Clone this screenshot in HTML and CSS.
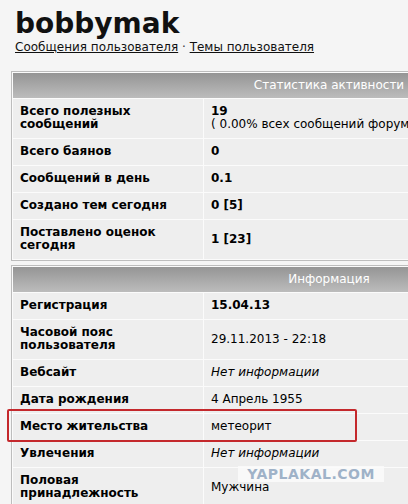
FILE: index.html
```html
<!DOCTYPE html>
<html lang="ru">
<head>
<meta charset="utf-8">
<title>bobbymak</title>
<link rel="stylesheet" href="styles.css">
</head>
<body>
<div class="page">
  <h1 class="title">bobbymak</h1>
  <div class="links"><a href="#">Сообщения пользователя</a> · <a href="#">Темы пользователя</a></div>

  <table class="stats">
    <colgroup><col class="c1"><col class="c2"></colgroup>
    <tr><td class="head" colspan="2">Статистика активности</td></tr>
    <tr><td class="label">Всего полезных<br>сообщений</td><td class="value"><b>19</b><br>( 0.00% всех сообщений форума )</td></tr>
    <tr><td class="label">Всего баянов</td><td class="value"><b>0</b></td></tr>
    <tr><td class="label">Сообщений в день</td><td class="value"><b>0.1</b></td></tr>
    <tr><td class="label">Создано тем сегодня</td><td class="value"><b>0 [5]</b></td></tr>
    <tr><td class="label">Поставлено оценок<br>сегодня</td><td class="value"><b>1 [23]</b></td></tr>
  </table>

  <table class="stats">
    <colgroup><col class="c1"><col class="c2"></colgroup>
    <tr><td class="head" colspan="2">Информация</td></tr>
    <tr><td class="label">Регистрация</td><td class="value"><b>15.04.13</b></td></tr>
    <tr><td class="label">Часовой пояс<br>пользователя</td><td class="value">29.11.2013 - 22:18</td></tr>
    <tr><td class="label">Вебсайт</td><td class="value"><i>Нет информации</i></td></tr>
    <tr><td class="label">Дата рождения</td><td class="value">4 Апрель 1955</td></tr>
    <tr><td class="label">Место жительства</td><td class="value">метеорит</td></tr>
    <tr><td class="label">Увлечения</td><td class="value"><i>Нет информации</i></td></tr>
    <tr><td class="label">Половая<br>принадлежность</td><td class="value">Мужчина</td></tr>
  </table>
</div>
<div class="highlight"></div>
<div class="watermark">YAPLAKAL.COM</div>
</body>
</html>
```
FILE: styles.css
```css
html, body {
  margin: 0;
  padding: 0;
  background: #f5f5f5;
  overflow: hidden;
}
body {
  font-family: "DejaVu Sans", Verdana, sans-serif;
  font-size: 12px;
  color: #000;
  width: 408px;
  height: 504px;
  position: relative;
}
.page {
  padding: 8px 0 0 15px;
}
.title {
  margin: 0;
  font-size: 28px;
  font-weight: bold;
  line-height: 32px;
  color: #111;
}
.links {
  line-height: 14px;
  margin-top: 0;
  color: #333;
}
.links a {
  color: #111;
  text-decoration: underline;
}
.stats {
  margin-left: -4px;
  width: 636px;
  border: 1px solid #bdbdbd;
  border-spacing: 1px;
  background: #fbfbfb;
  table-layout: fixed;
}
.stats col.c1 {
  width: 190px;
}
.stats:first-of-type {
  margin-top: 17px;
}
.stats + .stats {
  margin-top: 4px;
}
.stats td {
  padding: 6px 7px 7px;
  line-height: 13px;
  background: #eeeeee;
  vertical-align: middle;
  white-space: nowrap;
  overflow: hidden;
}
.stats td.head {
  height: 25px;
  padding: 0;
  text-align: center;
  color: #fff;
  background: linear-gradient(#959595, #bcbcbc);
  line-height: 25px;
}
.stats td.label {
  font-weight: bold;
}
.highlight {
  position: absolute;
  left: 7px;
  top: 409px;
  width: 346px;
  height: 29px;
  border: 2px solid #c4282c;
  border-radius: 2px;
}
.watermark {
  position: absolute;
  left: 238px;
  top: 466px;
  width: 146px;
  height: 16px;
  background: rgba(250, 250, 250, 0.85);
  color: #9fb2c8;
  font-weight: bold;
  font-size: 14px;
  line-height: 16px;
  text-align: center;
  letter-spacing: 0.5px;
}
```
